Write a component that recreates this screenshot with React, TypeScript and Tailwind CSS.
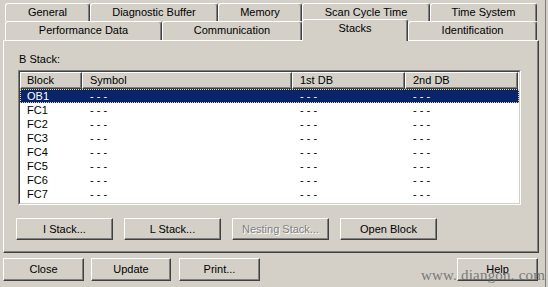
import React from "react";

const font = { fontFamily: '"Liberation Sans", Arial, sans-serif' };

function Tab({ className, children }: { className: string; children: React.ReactNode }) {
  return (
    <div
      className={
        "flex items-center justify-center border-l border-t border-r border-l-white border-t-white border-r-[#404040] rounded-t-[3px] shadow-[inset_-1px_0_0_#808080] text-[11px] leading-none text-black whitespace-nowrap bg-[#d4d0c8] " +
        className
      }
    >
      {children}
    </div>
  );
}

function Btn({ className, children, disabled }: { className: string; children: React.ReactNode; disabled?: boolean }) {
  return (
    <div
      className={
        "flex items-center justify-center border border-t-white border-l-white border-r-[#404040] border-b-[#404040] shadow-[inset_-1px_-1px_0_#808080] text-[11px] leading-none whitespace-nowrap " +
        (disabled ? "text-[#808080] [text-shadow:1px_1px_0_#ffffff] " : "text-black ") +
        className
      }
    >
      {children}
    </div>
  );
}

const rows = ["OB1", "FC1", "FC2", "FC3", "FC4", "FC5", "FC6", "FC7"];

export default function App() {
  return (
    <div className="w-[548px] h-[287px] bg-[#d4d0c8] overflow-hidden relative" style={font}>
      <div className="w-[546px] h-full border-r border-r-[#808080] flex flex-col">
        {/* tab row 1 */}
        <div className="flex mt-[3px] ml-[5px] h-[18px]">
          <Tab className="w-[85px] h-[18px]">General</Tab>
          <Tab className="w-[128px] h-[18px]">Diagnostic Buffer</Tab>
          <Tab className="w-[84px] h-[18px]">Memory</Tab>
          <Tab className="w-[128px] h-[18px]">Scan Cycle Time</Tab>
          <Tab className="w-[107px] h-[18px]">Time System</Tab>
        </div>
        {/* tab row 2 */}
        <div className="flex items-end ml-[5px] h-[19px]">
          <Tab className="w-[157px] h-[19px] pb-[1px]">Performance Data</Tab>
          <Tab className="w-[140px] h-[19px] pb-[1px]">Communication</Tab>
          <Tab className="w-[106px] h-[22px] -mb-px relative z-10 pb-[4px]">Stacks</Tab>
          <Tab className="w-[129px] h-[19px] pb-[1px]">Identification</Tab>
        </div>
        {/* panel */}
        <div className="ml-[3px] w-[536px] h-[213px] border border-t-white border-l-white border-r-[#404040] border-b-[#404040] shadow-[inset_-1px_-1px_0_#808080] flex flex-col">
          <div className="mt-[12px] ml-[15px] h-[13px] text-[11px] leading-[13px] text-black">B Stack:</div>
          <div className="mt-[4px] ml-[14px] w-[503px] h-[135px] border border-t-[#808080] border-l-[#808080] border-r-white border-b-white">
            <div className="w-full h-full border border-t-[#404040] border-l-[#404040] border-r-[#d4d0c8] border-b-[#d4d0c8] bg-white flex flex-col">
              {/* header */}
              <div className="flex h-[17px] text-[11px] leading-none text-black">
                <div className="w-[62px] h-full flex items-center pl-[6px] border-t border-l border-t-white border-l-white border-r border-b border-r-[#404040] border-b-[#404040] shadow-[inset_-1px_-1px_0_#808080] bg-[#d4d0c8]">Block</div>
                <div className="w-[210px] h-full flex items-center pl-[7px] border-t border-l border-t-white border-l-white border-r border-b border-r-[#404040] border-b-[#404040] shadow-[inset_-1px_-1px_0_#808080] bg-[#d4d0c8]">Symbol</div>
                <div className="w-[113px] h-full flex items-center pl-[7px] border-t border-l border-t-white border-l-white border-r border-b border-r-[#404040] border-b-[#404040] shadow-[inset_-1px_-1px_0_#808080] bg-[#d4d0c8]">1st DB</div>
                <div className="w-[113px] h-full flex items-center pl-[7px] border-t border-l border-t-white border-l-white border-r border-b border-r-[#404040] border-b-[#404040] shadow-[inset_-1px_-1px_0_#808080] bg-[#d4d0c8]">2nd DB</div>
              </div>
              {rows.map((r, i) => (
                <div
                  key={r}
                  className={
                    "flex h-[14px] text-[11px] leading-none items-center " +
                    (i === 0
                      ? "bg-[#0a246a] text-white outline outline-1 outline-dotted outline-[#e8d890] -outline-offset-1"
                      : "text-black")
                  }
                >
                  <div className="w-[62px] pl-[7px]">{r}</div>
                  <div className="w-[210px] pl-[8px]">- - -</div>
                  <div className="w-[113px] pl-[8px]">- - -</div>
                  <div className="w-[113px] pl-[8px]">- - -</div>
                </div>
              ))}
            </div>
          </div>
          <div className="flex mt-[13px] ml-[12px] gap-[11px]">
            <Btn className="w-[97px] h-[22px]">I Stack...</Btn>
            <Btn className="w-[97px] h-[22px]">L Stack...</Btn>
            <Btn className="w-[97px] h-[22px]" disabled>Nesting Stack...</Btn>
            <Btn className="w-[97px] h-[22px]">Open Block</Btn>
          </div>
        </div>
        {/* bottom buttons */}
        <div className="flex mt-[5px] ml-[3px]">
          <Btn className="w-[81px] h-[23px]">Close</Btn>
          <Btn className="w-[80px] h-[23px] ml-[7px]">Update</Btn>
          <Btn className="w-[81px] h-[23px] ml-[8px]">Print...</Btn>
          <Btn className="w-[81px] h-[23px] ml-[197px]">Help</Btn>
        </div>
      </div>
      <div
        className="absolute left-[421px] top-[268px] text-[15px] leading-[15px] tracking-[0.2px] text-[#6a6a6a] opacity-85 whitespace-nowrap"
        style={{ fontFamily: '"Liberation Serif", "Times New Roman", serif' }}
      >
        www. diangon. com
      </div>
    </div>
  );
}
